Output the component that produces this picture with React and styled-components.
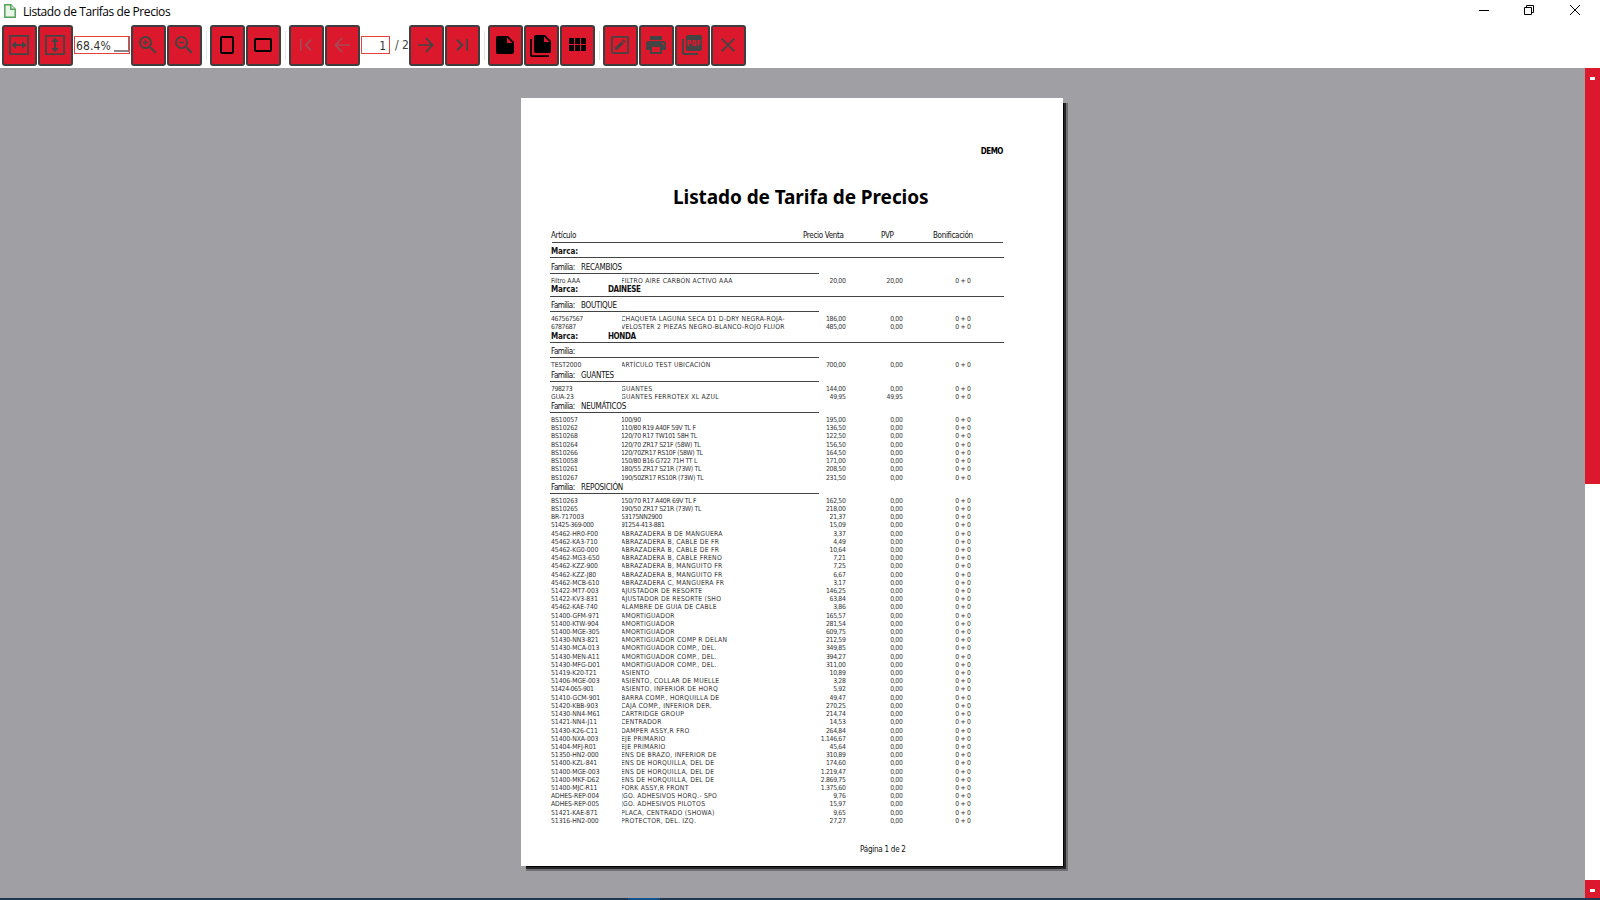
import React from "react";
import styled, { createGlobalStyle } from "styled-components";

const Global = createGlobalStyle`
  * { box-sizing: border-box; }
  body { margin: 0; background: #fff; overflow: hidden; }
`;

const RED = "#dc182c";
const INK = "#444";
const FADED = "#a94854";
const REPORT = `"DejaVu Sans Condensed", "DejaVu Sans", sans-serif`;

const Window = styled.div`
  width: 1600px;
  height: 900px;
  display: flex;
  flex-direction: column;
  background: #fff;
  font-family: "Open Sans", sans-serif;
`;
const TitleBar = styled.header`
  height: 24px;
  display: flex;
  align-items: flex-start;
  padding: 0 20px 0 4px;
`;
const DocIcon = styled.svg`
  width: 12px;
  height: 14px;
  margin-top: 4px;
`;
const WindowTitle = styled.span`
  flex: 1;
  margin-left: 7px;
  font-size: 12px;
  line-height: 24px;
  letter-spacing: -0.42px;
  color: #000;
`;
const Controls = styled.div`
  display: flex;
  gap: 35px;
  margin-top: 5px;
`;
const Control = styled.svg`
  width: 10px;
  height: 10px;
  display: block;
  fill: none;
  stroke: #000;
  &:last-child {
    margin-left: 1px;
  }
`;
const Toolbar = styled.nav`
  height: 44px;
  display: flex;
  align-items: flex-start;
  gap: 1px;
  padding: 1px 0 0 2px;
`;
const Button = styled.button`
  width: 35px;
  height: 41px;
  flex: none;
  border: 2px solid #3e3e3e;
  border-radius: 3px;
  background: ${RED};
  padding: 6px 0 0 3px;
  display: flex;
  align-items: flex-start;
  color: ${(p) => p.$color || INK};
`;
const Glyph = styled.svg`
  width: 24px;
  height: 24px;
  flex: none;
  fill: currentColor;
`;
const Divider = styled.i`
  width: 1px;
  height: 29px;
  margin: 6px 2px 0 3px;
  background: #e4e4e4;
`;
const Field = styled.div`
  width: ${(p) => p.$w}px;
  height: 18px;
  margin-top: 11px;
  border: 1px solid #e8403c;
  background: #fff;
  display: flex;
  justify-content: ${(p) => (p.$end ? "flex-end" : "space-between")};
  padding: ${(p) => (p.$end ? "0 3px 0 0" : "0 0 0 1px")};
  font: 12px/19px "DejaVu Sans Condensed", sans-serif;
  letter-spacing: ${(p) => (p.$end ? 0 : 0.1)}px;
  color: #333;
`;
const DropCorner = styled.span`
  width: 15px;
  height: 15px;
  border-right: 1px solid #777;
  border-bottom: 2px solid #888;
`;
const PageTotal = styled.span`
  width: 17px;
  margin-top: 11px;
  padding-left: 4px;
  font: 12px/19px "DejaVu Sans Condensed", sans-serif;
  color: #444;
  white-space: nowrap;
`;
const Body = styled.main`
  height: 830px;
  display: flex;
  background: #a09fa4;
`;
const Canvas = styled.section`
  flex: 1;
  padding: 30px 0 0 521px;
`;
const Scroll = styled.aside`
  width: 15px;
  display: flex;
  flex-direction: column;
  background: #fff;
`;
const ScrollPart = styled.div`
  height: ${(p) => p.$h}px;
  margin-top: ${(p) => (p.$end ? "auto" : 0)};
  padding: 9px 0 0 5px;
  background: ${RED};
`;
const Mark = styled.div`
  width: 5px;
  height: 3px;
  background: #fff;
`;
const Taskbar = styled.footer`
  height: 2px;
  display: flex;
  padding-left: 628px;
  background: #20374f;
`;
const TaskActive = styled.div`
  width: 32px;
  background: #12518a;
`;
const Paper = styled.article`
  width: 542px;
  height: 768px;
  background: #fff;
  box-shadow: 3px 3px 0 -2px #050505, 4px 4px 0 -1px #262626, 5px 5px 0 0 #707072;
  font-family: ${REPORT};
  color: #111;
  display: flex;
  flex-direction: column;
`;
const Company = styled.div`
  margin: 48px 60px 0 0;
  text-align: right;
  font-weight: bold;
  font-size: 8px;
  line-height: 12px;
  letter-spacing: -0.5px;
  color: #000;
`;
const ReportTitle = styled.h1`
  margin: 26px 0 -1px 152px;
  font-family: "Noto Sans", sans-serif;
  font-size: 19px;
  line-height: 26px;
  letter-spacing: -0.08px;
  font-weight: bold;
  color: #000;
  white-space: nowrap;
`;
const ColumnHeads = styled.div`
  margin: 21px 60px 0 31px;
  height: 13px;
  border-bottom: 1px solid #444;
  display: grid;
  grid-template-columns: 252px 78px 52px 1fr;
  font-size: 8px;
  line-height: 12px;
  letter-spacing: -0.33px;
  white-space: nowrap;
`;
const Head = styled.span`
  margin-left: -1px;
`;
const Group = styled.div`
  width: ${(p) => (p.$brand ? 454 : 269)}px;
  height: ${(p) => p.$h || 11}px;
  margin: ${(p) => p.$mt}px 0 0 29px;
  border-bottom: 1px solid #444;
  display: flex;
  padding: 1px 0 0 1px;
  font-size: 8px;
  line-height: 8px;
  white-space: nowrap;
  font-weight: ${(p) => (p.$brand ? "bold" : "normal")};
  letter-spacing: ${(p) => (p.$brand ? -0.4 : -0.25)}px;
`;
const GroupLabel = styled.span`
  width: ${(p) => (p.$brand ? 57 : 30)}px;
  letter-spacing: ${(p) => (p.$brand ? -0.1 : -0.5)}px;
`;
const Row = styled.div`
  height: 8px;
  margin: ${(p) => p.$mt || 0}px 0 0 30px;
  display: grid;
  grid-template-columns: 70px 170px 54.5px 57px 68px;
  font-size: 6.8px;
  line-height: 8px;
  color: #333;
  white-space: nowrap;
`;
const Code = styled.span`
  letter-spacing: ${(p) => (p.$tight ? -0.35 : -0.07)}px;
`;
const Desc = styled.span`
  overflow-x: clip;
  overflow-y: visible;
  margin-left: 1px;
  text-indent: -1px;
  letter-spacing: ${(p) => (p.$tight ? -0.28 : 0.26)}px;
`;
const Num = styled.span`
  text-align: right;
  letter-spacing: -0.32px;
`;
const PageNumber = styled.div`
  margin: 19px 0 0 339px;
  font-size: 8px;
  line-height: 12px;
  letter-spacing: -0.25px;
`;

const icons = {
  fitW: <path d="M2 2h20v20H2zM3.8 3.8v16.4h16.4V3.8zM9 8v3h6V8l4.2 4-4.2 4v-3H9v3l-4.200-4z" fillRule="evenodd" />,
  fitH: <path d="M2 2h20v20H2zM3.8 3.8v16.4h16.4V3.8zM8 9h3v6H8l4 4.200 4-4.200h-3V9h3l-4-4.200z" fillRule="evenodd" />,
  zoomIn: <path d="M15.500 14h-.79l-.28-.27A6.470 6.470 0 0 0 16 9.500 6.500 6.500 0 1 0 9.500 16c1.610 0 3.090-.59 4.230-1.570l.27.28v.79l5 4.990L20.490 19zm-6 0a4.500 4.500 0 1 1 0-9 4.500 4.500 0 0 1 0 9zM10.200 7H8.800v1.800H7v1.400h1.800V12h1.400v-1.800H12V8.800h-1.800z" />,
  zoomOut: <path d="M15.500 14h-.79l-.28-.27A6.470 6.470 0 0 0 16 9.500 6.500 6.500 0 1 0 9.500 16c1.610 0 3.090-.59 4.230-1.570l.27.28v.79l5 4.990L20.490 19zm-6 0a4.500 4.500 0 1 1 0-9 4.500 4.500 0 0 1 0 9zM7 8.800h5v1.400H7z" />,
  portrait: <rect x="6" y="4" width="12" height="16" rx="1" fill="none" stroke="currentColor" strokeWidth="2" />,
  landscape: <rect x="4" y="6" width="16" height="12" rx="1" fill="none" stroke="currentColor" strokeWidth="2" />,
  first: <path d="M6 6h1.700v12H6zM17.700 7.400 16.300 6l-6 6 6 6 1.400-1.400L13.100 12z" />,
  last: <path d="M16.300 6H18v12h-1.700zM6.300 7.400 7.700 6l6 6-6 6-1.400-1.400L10.900 12z" />,
  back: <path d="M20 11.200H7.300l5.600-5.800L11.700 4.200 4 12l7.700 7.800 1.200-1.200-5.600-5.800H20z" />,
  next: <path d="M4 11.200h12.700l-5.600-5.800 1.200-1.200L20 12l-7.700 7.800-1.200-1.200 5.600-5.800H4z" />,
  page: <path d="M5 3h10l6 6v10a2 2 0 0 1-2 2H5a2 2 0 0 1-2-2V5a2 2 0 0 1 2-2zm9 1.500V10h5.500z" fillRule="evenodd" />,
  pages: <path d="M7 2h9l6 6v10a2 2 0 0 1-2 2H7a2 2 0 0 1-2-2V4a2 2 0 0 1 2-2zm8 1.500V9h5.500zM1 6h1.800v16.200H20V24H3a2 2 0 0 1-2-2z" fillRule="evenodd" />,
  grid: <path d="M4 5h5v6H4zM10 5h5v6h-5zM16 5h5v6h-5zM4 12h5v6H4zM10 12h5v6h-5zM16 12h5v6h-5z" />,
  edit: <path d="M5 3h14a2 2 0 0 1 2 2v14a2 2 0 0 1-2 2H5a2 2 0 0 1-2-2V5a2 2 0 0 1 2-2zm-.2 1.800v14.400h14.400V4.800zM7 14.800l6.200-6.200 2.200 2.200L9.200 17H7zM14 7.800l1-1c.3-.3.6-.3.900 0l1.300 1.300c.3.3.3.6 0 .9l-1 1z" fillRule="evenodd" />,
  print: <path d="M19 8H5a3 3 0 0 0-3 3v6h4v4h12v-4h4v-6a3 3 0 0 0-3-3zm-3 11H8v-5h8zm3-7a1 1 0 1 1 0-2 1 1 0 0 1 0 2zM18 3H6v4h12z" fillRule="evenodd" />,
  pdf: <path d="M20 2H8a2 2 0 0 0-2 2v12a2 2 0 0 0 2 2h12a2 2 0 0 0 2-2V4a2 2 0 0 0-2-2zm-8.500 7.500a1.500 1.500 0 0 1-1.500 1.500H9v2H7.500V7H10a1.500 1.500 0 0 1 1.500 1.500zm5 2a1.500 1.500 0 0 1-1.500 1.500h-2.500V7H15a1.500 1.500 0 0 1 1.500 1.500zm4-3H19v1h1.500V11H19v2h-1.500V7h3zM9 9.500h1v-1H9zM4 6H2v14a2 2 0 0 0 2 2h14v-2H4zm10 5.500h1v-3h-1z" fillRule="evenodd" />,
  close: <path d="M19 6.200 17.800 5 12 10.800 6.200 5 5 6.200l5.800 5.800L5 17.800 6.200 19l5.800-5.800 5.800 5.800 1.200-1.200-5.800-5.800z" />,
};

const Tool = ({ icon, color }) => (
  <Button $color={color}>
    <Glyph viewBox="0 0 24 24">{icons[icon]}</Glyph>
  </Button>
);

/* Report lines; mt is the space above each line in pixels */
const B = (name, mt, h) => ({ kind: "brand", name, mt, h });
const F = (name, mt) => ({ kind: "family", name, mt });
const R = (code, desc, price, mt = 0, pvp = "0,00") => ({ kind: "row", code, desc, price, mt, pvp });

const lines = [
  B("", 4),
  F("RECAMBIOS", 5),
  R("Filtro AAA", "FILTRO AIRE CARBÓN ACTIVO AAA", "20,00", 3, "20,00"),
  B("DAINESE", 0, 12),
  F("BOUTIQUE", 4),
  R("467567567", "CHAQUETA LAGUNA SECA D1 D-DRY NEGRA-ROJA-", "186,00", 3),
  R("6787687", "VELOSTER 2 PIEZAS NEGRO-BLANCO-ROJO FLUOR", "485,00"),
  B("HONDA", 1),
  F("", 4),
  R("TEST2000", "ARTÍCULO TEST UBICACIÓN", "700,00", 3),
  F("GUANTES", 2),
  R("798273", "GUANTES", "144,00", 3),
  R("GUA-23", "GUANTES FERROTEX XL AZUL", "49,95", 0, "49,95"),
  F("NEUMÁTICOS", 1),
  R("BS10057", "100/90", "195,00", 3),
  R("BS10262", "110/80 R19 A40F 59V TL F", "136,50"),
  R("BS10268", "120/70 R17 TW101 58H TL", "122,50"),
  R("BS10264", "120/70 ZR17 S21F (58W) TL", "156,50", 1),
  R("BS10266", "120/70ZR17 RS10F (58W) TL", "164,50"),
  R("BS10058", "150/80 B16 G722 71H TT L", "171,00"),
  R("BS10261", "180/55 ZR17 S21R (73W) TL", "208,50"),
  R("BS10267", "190/50ZR17 RS10R (73W) TL", "231,50", 1),
  F("REPOSICIÓN", 1),
  R("BS10263", "150/70 R17 A40R 69V TL F", "162,50", 3),
  R("BS10265", "190/50 ZR17 S21R (73W) TL", "218,00"),
  R("BR-717003", "53175NN2900", "21,37"),
  R("51425-369-000", "91254-413-881", "15,09"),
  R("45462-HR0-F00", "ABRAZADERA B DE MANGUERA", "3,37", 1),
  R("45462-KA3-710", "ABRAZADERA B, CABLE DE FR", "4,49"),
  R("45462-KG0-000", "ABRAZADERA B, CABLE DE FR", "10,64"),
  R("45462-MG3-650", "ABRAZADERA B, CABLE FRENO", "7,21"),
  R("45462-KZZ-900", "ABRAZADERA B, MANGUITO FR", "7,25"),
  R("45462-KZZ-J80", "ABRAZADERA B, MANGUITO FR", "6,67", 1),
  R("45462-MCB-610", "ABRAZADERA C, MANGUERA FR", "3,17"),
  R("51422-MT7-003", "AJUSTADOR DE RESORTE", "146,25"),
  R("51422-KV3-831", "AJUSTADOR DE RESORTE (SHO", "63,84"),
  R("45462-KAE-740", "ALAMBRE DE GUIA DE CABLE", "3,86"),
  R("51400-GFM-971", "AMORTIGUADOR", "165,57", 1),
  R("51400-KTW-904", "AMORTIGUADOR", "281,54"),
  R("51400-MGE-305", "AMORTIGUADOR", "609,75"),
  R("51430-NN3-821", "AMORTIGUADOR COMP R DELAN", "212,59"),
  R("51430-MCA-013", "AMORTIGUADOR COMP., DEL.", "349,85"),
  R("51430-MEN-A11", "AMORTIGUADOR COMP., DEL.", "394,27", 1),
  R("51430-MFG-D01", "AMORTIGUADOR COMP., DEL.", "311,00"),
  R("51419-K20-T21", "ASIENTO", "10,89"),
  R("51406-MGE-003", "ASIENTO, COLLAR DE MUELLE", "3,28"),
  R("51424-065-901", "ASIENTO, INFERIOR DE HORQ", "5,92"),
  R("51410-GCM-901", "BARRA COMP., HORQUILLA DE", "49,47", 1),
  R("51420-KBB-903", "CAJA COMP., INFERIOR DER.", "270,25"),
  R("51430-NN4-M61", "CARTRIDGE GROUP", "214,74"),
  R("51421-NN4-J11", "CENTRADOR", "14,53"),
  R("51430-K26-C11", "DAMPER ASSY,R FRO", "264,84", 1),
  R("51400-NXA-003", "EJE PRIMARIO", "1.146,67"),
  R("51404-MFJ-R01", "EJE PRIMARIO", "45,64"),
  R("51350-HN2-000", "ENS DE BRAZO, INFERIOR DE", "310,89"),
  R("51400-KZL-841", "ENS DE HORQUILLA, DEL DE", "174,60"),
  R("51400-MGE-003", "ENS DE HORQUILLA, DEL DE", "1.219,47", 1),
  R("51400-MKF-D62", "ENS DE HORQUILLA, DEL DE", "2.869,75"),
  R("51400-MJC-R11", "FORK ASSY,R FRONT", "1.375,60"),
  R("ADHES-REP-004", "JGO. ADHESIVOS HORQ.- SPO", "9,76"),
  R("ADHES-REP-005", "JGO. ADHESIVOS PILOTOS", "15,97"),
  R("51421-KAE-871", "PLACA, CENTRADO (SHOWA)", "9,65", 1),
  R("51316-HN2-000", "PROTECTOR, DEL. IZQ.", "27,27"),
];

const Line = ({ l }) =>
  l.kind === "row" ? (
    <Row $mt={l.mt}>
      <Code $tight={/^[\d-]+$/.test(l.code)}>{l.code}</Code>
      <Desc $tight={/^\d/.test(l.desc)}>{l.desc}</Desc>
      <Num>{l.price}</Num>
      <Num>{l.pvp}</Num>
      <Num>0 + 0</Num>
    </Row>
  ) : (
    <Group $brand={l.kind === "brand"} $mt={l.mt} $h={l.h}>
      <GroupLabel $brand={l.kind === "brand"}>{l.kind === "brand" ? "Marca:" : "Familia:"}</GroupLabel>
      <span>{l.name}</span>
    </Group>
  );

export default function App() {
  return (
    <Window>
      <Global />
      <TitleBar>
        <DocIcon viewBox="0 0 12 14" fill="#eaf5ea" stroke="#55a058" strokeWidth="1.500">
          <path d="M.8.8h6l4.400 4.400v8H.8z" />
          <path d="M6.800.8v4.400h4.400" />
        </DocIcon>
        <WindowTitle>Listado de Tarifas de Precios</WindowTitle>
        <Controls>
          <Control viewBox="0 0 10 10"><path d="M0 5.500h10" /></Control>
          <Control viewBox="0 0 10 10"><path d="M.5 2.500h7v7h-7zM2.500 2.500v-2h7v7h-2" /></Control>
          <Control viewBox="0 0 10 10"><path d="M0 0l10 10M10 0L0 10" /></Control>
        </Controls>
      </TitleBar>
      <Toolbar>
        <Tool icon="fitW" />
        <Tool icon="fitH" />
        <Field $w={56}>68.4%<DropCorner /></Field>
        <Tool icon="zoomIn" />
        <Tool icon="zoomOut" />
        <Divider />
        <Tool icon="portrait" color="#000" />
        <Tool icon="landscape" color="#000" />
        <Divider />
        <Tool icon="first" color={FADED} />
        <Tool icon="back" color={FADED} />
        <Field $w={29} $end>1</Field>
        <PageTotal>/ 2</PageTotal>
        <Tool icon="next" />
        <Tool icon="last" />
        <Divider />
        <Tool icon="page" color="#000" />
        <Tool icon="pages" color="#000" />
        <Tool icon="grid" color="#000" />
        <Divider />
        <Tool icon="edit" />
        <Tool icon="print" />
        <Tool icon="pdf" />
        <Tool icon="close" />
      </Toolbar>
      <Body>
        <Canvas>
          <Paper>
            <Company>DEMO</Company>
            <ReportTitle>Listado de Tarifa de Precios</ReportTitle>
            <ColumnHeads>
              <Head>Artículo</Head>
              <Head>Precio Venta</Head>
              <Head>PVP</Head>
              <Head>Bonificación</Head>
            </ColumnHeads>
            {lines.map((l, i) => (
              <Line key={i} l={l} />
            ))}
            <PageNumber>Página 1 de 2</PageNumber>
          </Paper>
        </Canvas>
        <Scroll>
          <ScrollPart $h={416}><Mark /></ScrollPart>
          <ScrollPart $h={18} $end><Mark /></ScrollPart>
        </Scroll>
      </Body>
      <Taskbar><TaskActive /></Taskbar>
    </Window>
  );
}
